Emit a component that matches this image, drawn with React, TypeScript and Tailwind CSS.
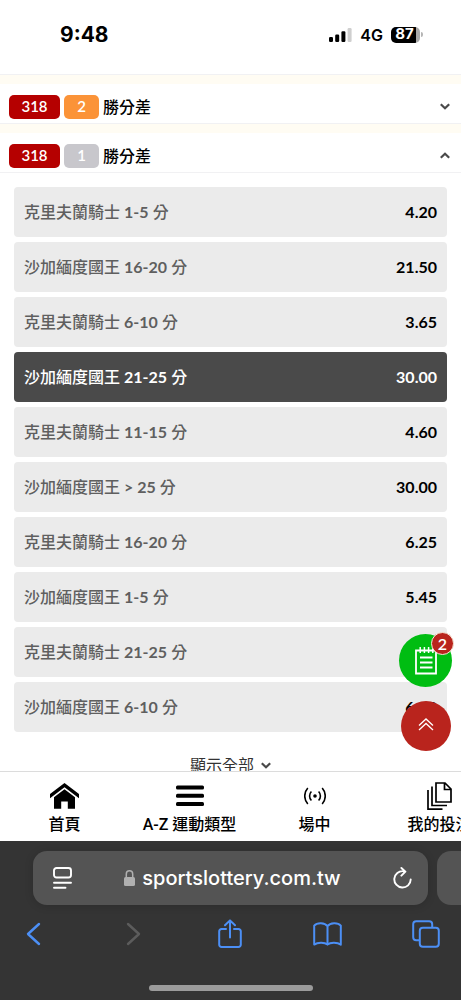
import React from "react";

type Outcome = { team: string; range: string; odds: string; selected?: boolean };

const outcomes: Outcome[] = [
  { team: "克里夫蘭騎士", range: "1-5", odds: "4.20" },
  { team: "沙加緬度國王", range: "16-20", odds: "21.50" },
  { team: "克里夫蘭騎士", range: "6-10", odds: "3.65" },
  { team: "沙加緬度國王", range: "21-25", odds: "30.00", selected: true },
  { team: "克里夫蘭騎士", range: "11-15", odds: "4.60" },
  { team: "沙加緬度國王", range: "> 25", odds: "30.00" },
  { team: "克里夫蘭騎士", range: "16-20", odds: "6.25" },
  { team: "沙加緬度國王", range: "1-5", odds: "5.45" },
  { team: "克里夫蘭騎士", range: "21-25", odds: "9.00" },
  { team: "沙加緬度國王", range: "6-10", odds: "6.00" },
];

function Chevron({ up = false }: { up?: boolean }) {
  return (
    <svg className="h-[7px] w-[10px]" viewBox="0 0 10 7" fill="none" stroke="#4a4a4a" strokeWidth="2.2" aria-hidden="true">
      <path d={up ? "M.8 5.8 5 1.7l4.2 4.1" : "M.8 1.2 5 5.3l4.2-4.1"} />
    </svg>
  );
}

function StatusBar() {
  return (
    <header className="flex h-[74px] shrink-0 items-center justify-between bg-white pr-[38px] pb-[5px] pl-[60px] font-['Inter',sans-serif]">
      <span className="text-[21px] font-bold">9:48</span>
      <div className="flex items-center gap-2">
        <svg className="h-[14px] w-[23px]" viewBox="0 0 23 14" aria-label="Signal" role="img">
          <rect x="0" y="9" width="4" height="5" rx="1.2" />
          <rect x="6.2" y="6.5" width="4" height="7.5" rx="1.2" />
          <rect x="12.4" y="3.2" width="4" height="10.8" rx="1.2" />
          <rect x="18.6" y="0" width="4" height="14" rx="1.2" fill="#cfcfcf" />
        </svg>
        <span className="text-base font-semibold">4G</span>
        <div className="flex items-center gap-px">
          <span className="flex h-4 w-[29px] items-center justify-center rounded-[5px] bg-[linear-gradient(90deg,#000_87%,#a8a8a8_87%)] pr-[2px] text-[15px] font-bold text-white">
            87
          </span>
          <span className="h-[5px] w-[2px] rounded-r-full bg-[#b5b5b5]" />
        </div>
      </div>
    </header>
  );
}

function MarketHeader({ count, tone, open = false }: { count: string; tone: string; open?: boolean }) {
  return (
    <button
      type="button"
      aria-expanded={open}
      className="flex h-[49px] w-full items-center border-t-[9px] border-b border-t-[#fffcf3] border-b-[#f1f1f3] bg-white pt-[6px] pr-[11px] pl-[9px] text-base"
    >
      <span className="flex h-6 w-[51px] items-center justify-center rounded-[5px] bg-[#b50000] text-[15px] font-semibold text-white">
        318
      </span>
      <span className={`ml-1 flex h-6 w-[35px] items-center justify-center rounded-[5px] text-[15px] font-semibold text-white ${tone}`}>
        {count}
      </span>
      <span className="ml-1 flex-1 text-left font-medium text-black">勝分差</span>
      <Chevron up={open} />
    </button>
  );
}

function FloatingButtons() {
  return (
    <div className="absolute right-[9px] bottom-5 flex flex-col items-center gap-[14px]">
      <button type="button" aria-label="投注單" className="relative flex h-[53px] w-[53px] items-center justify-center rounded-full bg-[#00bd12]">
        <svg className="h-[29px] w-[22px]" viewBox="0 0 22 29" fill="none" stroke="#fff" strokeWidth="1.8" aria-hidden="true">
          <path d="M1 4.5h20v23H1zM5 11.5h12.5M5 16.5h12.5M5 21.5h12.5" />
          <path d="M5.2 1v6M9.4 1v6M13.6 1v6M17.8 1v6" strokeWidth="1.5" />
        </svg>
        <span className="absolute -top-[2px] -right-[2px] flex h-[23px] w-[23px] items-center justify-center rounded-full border border-[#f6e9d9] bg-[#b9241d] text-base font-semibold text-white">
          2
        </span>
      </button>
      <button type="button" aria-label="回到頂部" className="flex h-[50px] w-[50px] items-center justify-center rounded-full bg-[#b9241d]">
        <svg className="mb-1 h-[13px] w-[16px]" viewBox="0 0 16 13" fill="none" stroke="#fff" strokeWidth="1.3" aria-hidden="true">
          <path d="M1 7.5 8 1l7 6.5M1 12 8 5.5l7 6.5" />
        </svg>
      </button>
    </div>
  );
}

function HomeIcon() {
  return (
    <svg className="h-[26px] w-[29px]" viewBox="0 0 29 26" aria-hidden="true">
      <path d="M14.5 0 29 11v4.2L14.5 4.2 0 15.2V11z" />
      <path d="M14.5 6.2 25 14.2V25.7h-7.2v-7.2h-6.6v7.2H4V14.2z" />
    </svg>
  );
}

function MenuIcon() {
  return (
    <svg className="h-[22px] w-7" viewBox="0 0 28 22" aria-hidden="true">
      <rect y="0.5" width="28" height="4" rx="1.5" />
      <rect y="8.8" width="28" height="4" rx="1.5" />
      <rect y="17" width="28" height="4" rx="1.5" />
    </svg>
  );
}

function LiveIcon() {
  return (
    <svg className="h-[18px] w-[22px]" viewBox="0 0 22 18" fill="none" stroke="#000" strokeWidth="1.6" aria-hidden="true">
      <circle cx="11" cy="9" r="1.8" fill="#000" stroke="none" />
      <path d="M7.4 4.5a6.5 6.5 0 0 0 0 9M14.6 4.5a6.5 6.5 0 0 1 0 9M3.8 1a12 12 0 0 0 0 16M18.2 1a12 12 0 0 1 0 16" />
    </svg>
  );
}

function BetsIcon() {
  return (
    <svg className="h-[28px] w-[25px]" viewBox="0 0 25 28" fill="none" stroke="#000" strokeWidth="1.7" aria-hidden="true">
      <path d="M9 1h9l6 6v13H9zM17.5 1.2v6.3h6.3" />
      <path d="M5 4.5v19h15M1 8v19.2h14.5" />
    </svg>
  );
}

const tabs = [
  { label: "首頁", icon: <HomeIcon /> },
  { label: "A-Z 運動類型", icon: <MenuIcon /> },
  { label: "場中", icon: <LiveIcon /> },
  { label: "我的投注", icon: <BetsIcon /> },
];

function TabBar() {
  return (
    <nav className="flex h-[70px] shrink-0 overflow-hidden border-t border-[#dcdcdc] bg-white pl-[2px] font-['Roboto','Noto_Sans_CJK_TC',sans-serif]">
      {tabs.map((tab) => (
        <a key={tab.label} href="#" className="flex w-[125px] shrink-0 flex-col items-center gap-[2px] pt-[9px] text-base leading-6 font-medium text-black">
          <span className="flex h-[30px] items-center">{tab.icon}</span>
          <span className="whitespace-nowrap">{tab.label}</span>
        </a>
      ))}
    </nav>
  );
}

function BrowserBar() {
  return (
    <footer className="flex h-[159px] shrink-0 flex-col overflow-hidden bg-[#343434] pt-[10px] font-['Inter',sans-serif]">
      <div className="flex gap-[9px] pl-[33px]">
        <div className="flex h-[54px] flex-1 items-center justify-between rounded-[14px] bg-[#545454] pr-4 pl-5 shadow-[0_1px_8px_rgba(0,0,0,0.15)]">
          <button type="button" aria-label="Page menu">
            <svg className="h-[22px] w-[19px]" viewBox="0 0 19 22" fill="none" stroke="#fff" strokeWidth="1.9" strokeLinecap="round" aria-hidden="true">
              <rect x="1" y="1" width="17" height="9.5" rx="2.5" />
              <path d="M1 15.8h17M1 20.7h11.5" />
            </svg>
          </button>
          <a href="#" className="flex items-center gap-[7px] text-xl font-medium text-white">
            <svg className="h-4 w-[11px]" viewBox="0 0 11 16" aria-hidden="true">
              <rect y="7" width="11" height="9" rx="1.6" fill="#b0b0b0" />
              <path d="M2.3 8V4a3.2 3.2 0 0 1 6.4 0v4" fill="none" stroke="#b0b0b0" strokeWidth="1.5" />
            </svg>
            sportslottery.com.tw
          </a>
          <button type="button" aria-label="Reload">
            <svg className="h-[22px] w-[19px]" viewBox="0 0 19 22" fill="none" stroke="#fff" strokeWidth="1.9" strokeLinecap="round" strokeLinejoin="round" aria-hidden="true">
              <path d="M10.5 4.2A8.2 8.2 0 1 0 17.7 12.5M8.4 1l4 3.7-4 4" />
            </svg>
          </button>
        </div>
        <div className="h-[54px] w-6 rounded-l-[14px] bg-[#545454]" />
      </div>
      <div className="flex h-[58px] items-center justify-between pr-[21px] pl-[19px]">
        <button type="button" aria-label="Back" className="flex w-[29px] justify-center">
          <svg className="h-6 w-[15px]" viewBox="0 0 15 24" fill="none" stroke="#4c8ff5" strokeWidth="2.4" strokeLinecap="round" strokeLinejoin="round" aria-hidden="true">
            <path d="M13 2 2 12l11 10" />
          </svg>
        </button>
        <button type="button" aria-label="Forward" className="flex w-[29px] justify-center pl-1">
          <svg className="h-6 w-[15px]" viewBox="0 0 15 24" fill="none" stroke="#5c5c5c" strokeWidth="2.4" strokeLinecap="round" strokeLinejoin="round" aria-hidden="true">
            <path d="m2 2 11 10L2 22" />
          </svg>
        </button>
        <button type="button" aria-label="Share" className="flex w-[29px] justify-center">
          <svg className="h-[30px] w-6" viewBox="0 0 24 30" fill="none" stroke="#4c8ff5" strokeWidth="2" strokeLinecap="round" strokeLinejoin="round" aria-hidden="true">
            <path d="M8 10H3.5A2.3 2.3 0 0 0 1.2 12.3v13.4A2.3 2.3 0 0 0 3.5 28h17a2.3 2.3 0 0 0 2.3-2.3V12.3A2.3 2.3 0 0 0 20.5 10H16M12 18.5V1.5M7 6.3l5-4.9 5 4.9" />
          </svg>
        </button>
        <button type="button" aria-label="Bookmarks" className="flex w-[29px] justify-center">
          <svg className="h-6 w-[29px]" viewBox="0 0 29 24" fill="none" stroke="#4c8ff5" strokeWidth="2" strokeLinejoin="round" aria-hidden="true">
            <path d="M14.5 4.2C11.8.4 4.2.2 1.2 3.6V22.6c3.3-2.2 10.3-2.5 13.3 0 3-2.5 10-2.2 13.3 0V3.6C24.8.2 17.2.4 14.5 4.2zM14.5 4.2v18.4" />
          </svg>
        </button>
        <button type="button" aria-label="Tabs" className="flex w-[29px] justify-center">
          <svg className="h-7 w-7" viewBox="0 0 28 28" fill="none" stroke="#4c8ff5" strokeWidth="2" strokeLinejoin="round" aria-hidden="true">
            <rect x="7.8" y="7.8" width="19" height="19" rx="3" />
            <path d="M7.5 20.2H4.2a3 3 0 0 1-3-3v-13a3 3 0 0 1 3-3h13a3 3 0 0 1 3 3V7.5" />
          </svg>
        </button>
      </div>
      <div className="mx-auto mt-[22px] h-[6px] w-[164px] rounded-full bg-[#9b9b9b]" />
    </footer>
  );
}

export default function App() {
  return (
    <div className="flex h-screen flex-col bg-white font-['Lato','Noto_Sans_CJK_TC',sans-serif] text-black">
      <StatusBar />
      <div className="relative flex min-h-0 flex-1 flex-col">
        <main className="min-h-0 flex-1 overflow-hidden border-t border-[#f1f1f3]">
          <MarketHeader count="2" tone="bg-[#fb9338]" />
          <MarketHeader count="1" tone="bg-[#c8c7cc]" open />
          <ul className="flex flex-col gap-[5px] px-[14px] pt-[14px]">
            {outcomes.map((o) => (
              <li key={o.team + o.range}>
                <button
                  type="button"
                  aria-pressed={!!o.selected}
                  className={`flex h-[50px] w-full items-center justify-between rounded-[4px] px-[10px] text-base ${
                    o.selected ? "bg-[#4a4a4a] text-white" : "bg-[#ebebeb] text-[#5f5f5f]"
                  }`}
                >
                  <span className="font-medium">
                    {o.team} <span className="font-bold">{o.range}</span> 分
                  </span>
                  <span className={`font-bold ${o.selected ? "text-white" : "text-black"}`}>{o.odds}</span>
                </button>
              </li>
            ))}
          </ul>
          <button type="button" className="mx-auto mt-[21px] flex items-center gap-[7px] text-base text-[#333]">
            顯示全部
            <Chevron />
          </button>
        </main>
        <FloatingButtons />
      </div>
      <TabBar />
      <BrowserBar />
    </div>
  );
}
